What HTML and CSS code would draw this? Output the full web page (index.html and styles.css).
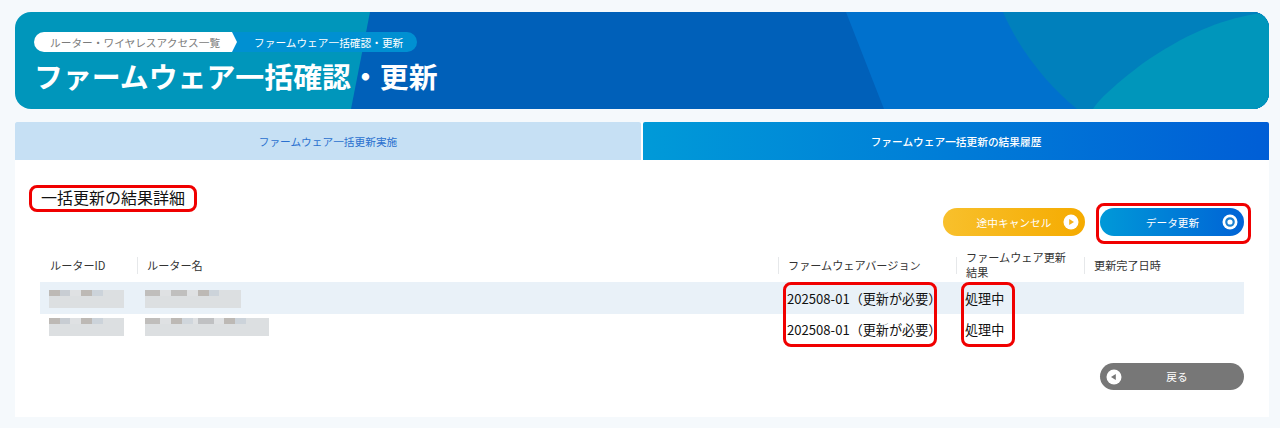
FILE: index.html
```html
<!DOCTYPE html>
<html lang="ja">
<head>
<meta charset="utf-8">
<title>ファームウェア一括確認・更新</title>
<link rel="stylesheet" href="styles.css">
</head>
<body>
<header class="hero">
  <svg class="hero-bg" viewBox="0 0 1254 97" preserveAspectRatio="none" aria-hidden="true">
    <rect width="1254" height="97" fill="#0096bb"/>
    <path d="M355 0H1254V97H336Z" fill="#0060b9"/>
    <path d="M831 0H1254V97H869Z" fill="#0071cd"/>
    <path d="M988 0C1005 40 1035 75 1062 97H1254V0Z" fill="#0080bc"/>
    <path d="M1078 97C1085 85 1110 65 1127 52C1170 22 1205 8 1240 2C1248 1 1254 3 1254 10V97Z" fill="#0096bb"/>
  </svg>
  <nav class="crumbs">
    <span class="crumb crumb-first">ルーター・ワイヤレスアクセス一覧</span>
    <span class="crumb crumb-current">ファームウェア一括確認・更新</span>
  </nav>
  <h1 class="hero-title">ファームウェア一括確認・更新</h1>
</header>
<main class="card">
  <div class="tabs">
    <a class="tab tab-off">ファームウェア一括更新実施</a>
    <a class="tab tab-on">ファームウェア一括更新の結果履歴</a>
  </div>
  <h2 class="section-title">一括更新の結果詳細</h2>
  <div class="toolbar">
    <button class="btn btn-cancel">途中キャンセル
      <svg class="btn-icon btn-icon-right" viewBox="0 0 16 16"><circle cx="8" cy="8" r="7.5" fill="#fff"/><path d="M6.2 5 11 8 6.2 11Z" fill="#f6b21a"/></svg>
    </button>
    <button class="btn btn-data">データ更新
      <svg class="btn-icon btn-icon-right" viewBox="0 0 16 16"><circle cx="8" cy="8" r="7.5" fill="#fff"/><circle cx="8" cy="8" r="3.7" fill="none" stroke="#1a7fd0" stroke-width="2.2"/></svg>
    </button>
  </div>
  <table class="results">
    <colgroup>
      <col class="col-id"><col class="col-name"><col class="col-ver"><col class="col-res"><col class="col-date">
    </colgroup>
    <thead>
      <tr>
        <th>ルーターID</th>
        <th>ルーター名</th>
        <th>ファームウェアバージョン</th>
        <th>ファームウェア更新結果</th>
        <th>更新完了日時</th>
      </tr>
    </thead>
    <tbody>
      <tr class="row-shade">
        <td><span class="mosaic mosaic-id"></span></td>
        <td><span class="mosaic mosaic-name"></span></td>
        <td>202508-01（更新が必要）</td>
        <td>処理中</td>
        <td></td>
      </tr>
      <tr class="row-plain">
        <td><span class="mosaic mosaic-id mosaic-up"></span></td>
        <td><span class="mosaic mosaic-name-long mosaic-up"></span></td>
        <td>202508-01（更新が必要）</td>
        <td>処理中</td>
        <td></td>
      </tr>
    </tbody>
  </table>
  <div class="footer-actions">
    <button class="btn btn-back">
      <svg class="btn-icon btn-icon-left" viewBox="0 0 16 16"><circle cx="8" cy="8" r="7.5" fill="#fff"/><path d="M9.8 5 5 8 9.8 11Z" fill="#777"/></svg>
      戻る
    </button>
  </div>
  <span class="mark mark-title"></span>
  <span class="mark mark-data"></span>
  <span class="mark mark-version"></span>
  <span class="mark mark-result"></span>
</main>
</body>
</html>
```
FILE: styles.css
```css
* { box-sizing: border-box; }
html, body { height: 100%; }
body {
  margin: 0;
  padding: 12px 11px 11px 15px;
  background: #f5f9fc;
  font-family: "Noto Sans CJK JP", "Noto Sans", sans-serif;
  color: #222;
  overflow: hidden;
}

.hero {
  position: relative;
  height: 97px;
  margin-bottom: 13px;
  padding: 20px 19px 0;
  border-radius: 16px;
  overflow: hidden;
}
.hero-bg { position: absolute; inset: 0; width: 100%; height: 100%; }
.crumbs { position: relative; display: flex; height: 20px; }
.crumb {
  display: flex;
  align-items: center;
  height: 20px;
  font-size: 10.7px;
  white-space: nowrap;
}
.crumb-first {
  position: relative;
  z-index: 1;
  width: 203px;
  padding-left: 16px;
  background: #fff;
  color: #7b7b7b;
  border-radius: 10px 0 0 10px;
  clip-path: polygon(0 0, 198px 0, 203px 50%, 198px 100%, 0 100%);
}
.crumb-current {
  width: 186px;
  margin-left: -6px;
  padding-left: 23px;
  background: #0090d2;
  color: #fff;
  border-radius: 0 10px 10px 0;
}
.hero-title {
  position: relative;
  margin: 2px 0 0 0;
  font-size: 28.9px;
  line-height: 42px;
  font-weight: 700;
  color: #fff;
  white-space: nowrap;
}

.card {
  position: relative;
  height: 295px;
  background: #fff;
}
.tabs { display: flex; gap: 2px; height: 38px; }
.tab {
  flex: 1;
  display: flex;
  align-items: center;
  justify-content: center;
  font-size: 10.7px;
  border-radius: 2px 2px 0 0;
}
.tab-off { background: #c6e0f4; color: #2a70cf; }
.tab-on { background: linear-gradient(90deg, #009ad8, #005ed6); color: #fff; font-weight: 500; }

.section-title {
  margin: 25px 0 0 26px;
  font-size: 16px;
  line-height: 24px;
  font-weight: 400;
  color: #111;
}
.toolbar {
  display: flex;
  justify-content: flex-end;
  gap: 15px;
  margin: -1px 25px 0 0;
}
.btn {
  position: relative;
  display: block;
  height: 28px;
  border: 0;
  border-radius: 14px;
  color: #fff;
  font-family: inherit;
  font-size: 10.7px;
  text-align: center;
  padding: 0;
}
.btn-cancel {
  width: 142px;
  background: linear-gradient(90deg, #f8c02c, #f5ab00);
}
.btn-data {
  width: 144px;
  padding-left: 1px;
  background: linear-gradient(90deg, #0099d8, #0063d6);
}
.btn-back {
  width: 144px;
  height: 27px;
  padding-left: 10px;
  background: #777;
}
.btn-icon { position: absolute; top: 6px; width: 16px; height: 16px; }
.btn-icon-right { right: 6px; }
.btn-icon-left { left: 6px; }

.results {
  width: 1204px;
  margin: 14px 0 0 25px;
  border-collapse: collapse;
  table-layout: fixed;
}
.col-id { width: 97px; }
.col-name { width: 641px; }
.col-ver { width: 178px; }
.col-res { width: 128px; }
.col-date { width: 160px; }
.results th {
  position: relative;
  height: 32px;
  padding: 0 10px 2px;
  font-size: 11.15px;
  line-height: 15px;
  font-weight: 400;
  text-align: left;
  color: #333;
}
.results th + th::before {
  content: "";
  position: absolute;
  left: 0;
  top: 7px;
  height: 17px;
  border-left: 1px solid #e6e8ea;
}
.results td {
  height: 32px;
  padding: 0 9px;
  font-size: 13.1px;
  color: #111;
  white-space: nowrap;
}
.row-plain td { padding-bottom: 2px; }
.row-shade { background: #e9f1f8; }
.mosaic {
  display: block;
  height: 18px;
  margin: 1px 0 0 -1px;
  background-color: #dcdfe1;
  background-repeat: no-repeat;
  background-size: 100% 6px;
}
.mosaic-up { margin-top: -4px; }
.mosaic-id {
  width: 75px;
  margin-left: 0;
  background-image: linear-gradient(90deg, #bdb9b5 0 11px, #c8cdd3 11px 21px, #dfe1e3 21px 32px, #bdb9b5 32px 43px, #ccd3da 43px 54px, #dcdfe1 54px);
}
.mosaic-name {
  width: 96px;
  background-image: linear-gradient(90deg, #c0bebc 0 15px, #dfe1e3 15px 26px, #c0bfbe 26px 42px, #dfe1e3 42px 53px, #bdb9b5 53px 64px, #ccd3da 64px 74px, #dcdfe1 74px);
}
.mosaic-name-long {
  width: 124px;
  background-image: linear-gradient(90deg, #c0bebc 0 15px, #dfe1e3 15px 26px, #bdb9b5 26px 37px, #d0d6dc 37px 48px, #dfe1e3 48px 53px, #c0c1c3 53px 69px, #dfe1e3 69px 79px, #bdb9b5 79px 90px, #ccd3da 90px 101px, #dcdfe1 101px);
}
.footer-actions {
  display: flex;
  justify-content: flex-end;
  margin: 17px 25px 0 0;
}

.mark {
  position: absolute;
  border: 3px solid #f00000;
  border-radius: 8px;
  pointer-events: none;
}
.mark-title { left: 14px; top: 63px; width: 168px; height: 27px; }
.mark-data { left: 1081px; top: 81px; width: 155px; height: 41px; }
.mark-version { left: 768px; top: 160px; width: 154px; height: 65px; }
.mark-result { left: 946px; top: 160px; width: 54px; height: 65px; }
```
